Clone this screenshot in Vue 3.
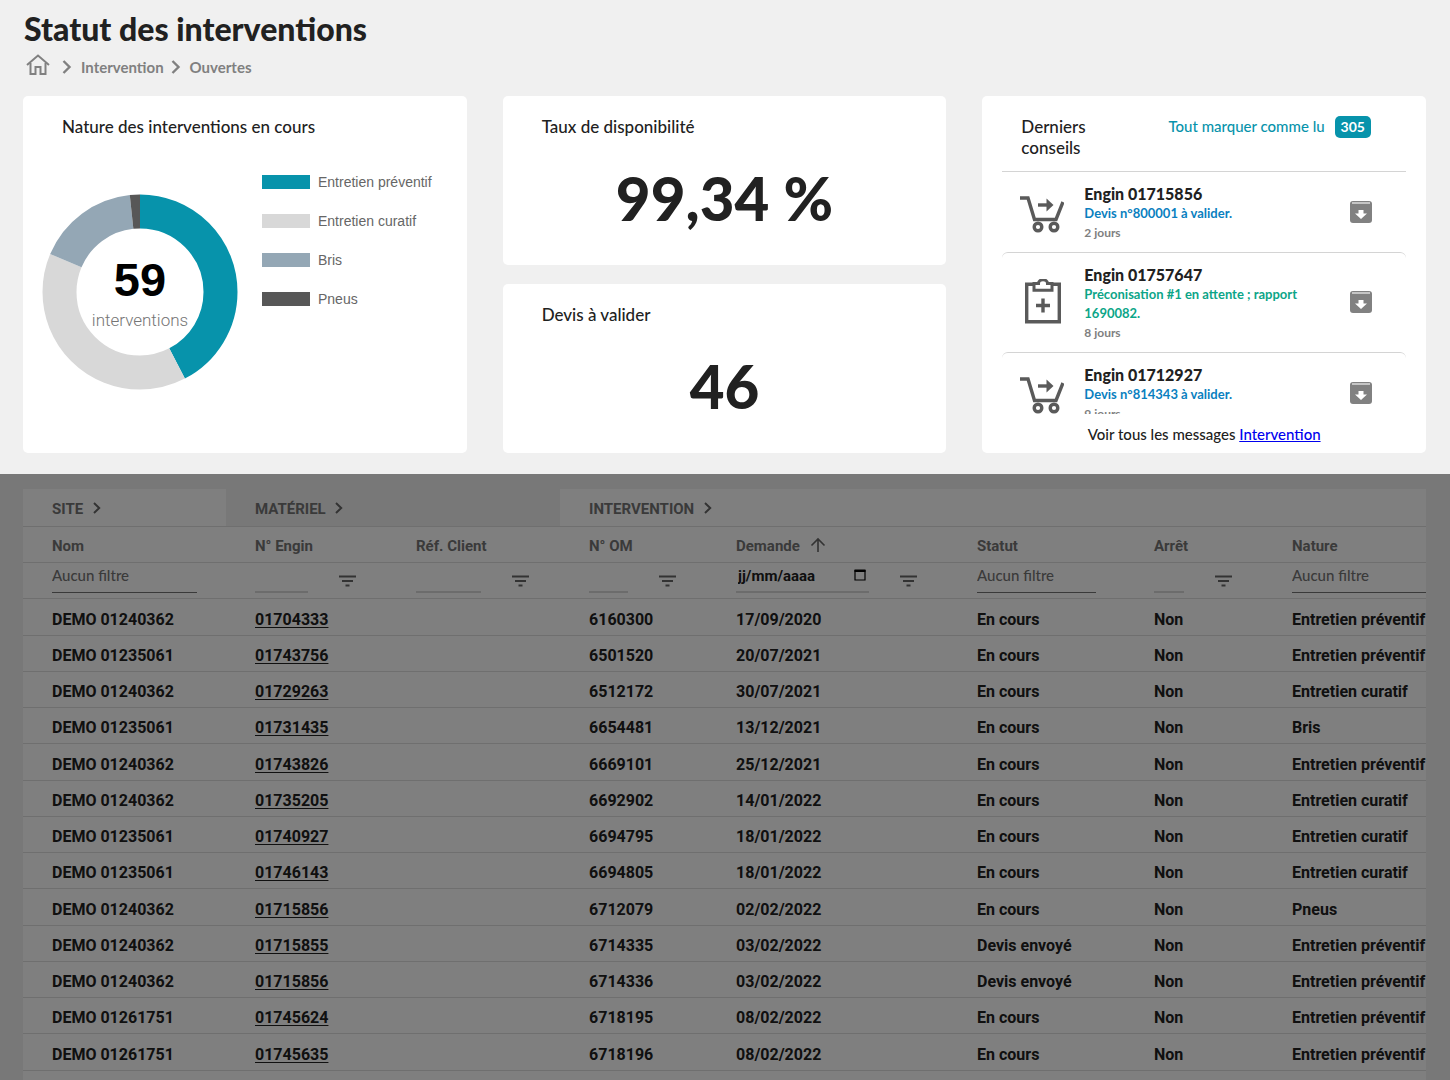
<script setup>
import { ref } from 'vue'

const slices = [
  { label: 'Entretien préventif', value: 25, color: '#0793ab' },
  { label: 'Entretien curatif', value: 23, color: '#d8d8d8' },
  { label: 'Bris', value: 10, color: '#94a7b5' },
  { label: 'Pneus', value: 1, color: '#575757' },
]
const total = slices.reduce((sum, s) => sum + s.value, 0)
const arcs = slices.map((s, i) => ({
  ...s,
  start: slices.slice(0, i).reduce((sum, p) => sum + p.value, 0),
}))

const tips = [
  { machine: 'Engin 01715856', text: 'Devis n°800001 à valider.', age: '2 jours', kind: 'quote' },
  { machine: 'Engin 01757647', text: 'Préconisation #1 en attente ; rapport 1690082.', age: '8 jours', kind: 'report' },
  { machine: 'Engin 01712927', text: 'Devis n°814343 à valider.', age: '9 jours', kind: 'quote' },
]

const columns = [
  { key: 'site', label: 'Nom', filter: 'select' },
  { key: 'machine', label: 'N° Engin', filter: 'text' },
  { key: 'client', label: 'Réf. Client', filter: 'text' },
  { key: 'order', label: 'N° OM', filter: 'text' },
  { key: 'asked', label: 'Demande', filter: 'date', sorted: true },
  { key: 'status', label: 'Statut', filter: 'select' },
  { key: 'stopped', label: 'Arrêt', filter: 'text' },
  { key: 'nature', label: 'Nature', filter: 'select' },
]

const rows = [
  ['DEMO 01240362', '01704333', '6160300', '17/09/2020', 'En cours', 'Entretien préventif'],
  ['DEMO 01235061', '01743756', '6501520', '20/07/2021', 'En cours', 'Entretien préventif'],
  ['DEMO 01240362', '01729263', '6512172', '30/07/2021', 'En cours', 'Entretien curatif'],
  ['DEMO 01235061', '01731435', '6654481', '13/12/2021', 'En cours', 'Bris'],
  ['DEMO 01240362', '01743826', '6669101', '25/12/2021', 'En cours', 'Entretien préventif'],
  ['DEMO 01240362', '01735205', '6692902', '14/01/2022', 'En cours', 'Entretien curatif'],
  ['DEMO 01235061', '01740927', '6694795', '18/01/2022', 'En cours', 'Entretien curatif'],
  ['DEMO 01235061', '01746143', '6694805', '18/01/2022', 'En cours', 'Entretien curatif'],
  ['DEMO 01240362', '01715856', '6712079', '02/02/2022', 'En cours', 'Pneus'],
  ['DEMO 01240362', '01715855', '6714335', '03/02/2022', 'Devis envoyé', 'Entretien préventif'],
  ['DEMO 01240362', '01715856', '6714336', '03/02/2022', 'Devis envoyé', 'Entretien préventif'],
  ['DEMO 01261751', '01745624', '6718195', '08/02/2022', 'En cours', 'Entretien préventif'],
  ['DEMO 01261751', '01745635', '6718196', '08/02/2022', 'En cours', 'Entretien préventif'],
].map(([site, machine, order, asked, status, nature]) => ({
  site, machine, client: '', order, asked, status, stopped: 'Non', nature,
}))

const filters = ref({ machine: '', client: '', order: '', asked: '', stopped: '' })
</script>

<template>
  <div class="page">
    <header class="head">
      <h1>Statut des interventions</h1>
      <nav class="crumbs" aria-label="Fil d'Ariane">
        <a href="#" class="home" aria-label="Accueil">
          <svg width="24" height="22" viewBox="0 0 24 22" fill="none" stroke="currentColor" stroke-width="2">
            <path d="M1 11 12 1.6 23 11" />
            <path d="M4.5 9v11h5v-7h5v7h5V9" />
          </svg>
        </a>
        <svg class="sep" width="10" height="14" viewBox="0 0 10 14" fill="none" stroke="currentColor" stroke-width="2.4"><path d="m1.5 1 6 6-6 6" /></svg>
        <a href="#">Intervention</a>
        <svg class="sep" width="10" height="14" viewBox="0 0 10 14" fill="none" stroke="currentColor" stroke-width="2.4"><path d="m1.5 1 6 6-6 6" /></svg>
        <a href="#">Ouvertes</a>
      </nav>
    </header>

    <main class="cards">
      <section class="card">
        <h2>Nature des interventions en cours</h2>
        <div class="chart">
          <div class="donut">
            <svg width="196" height="196" viewBox="0 0 196 196">
              <circle
                v-for="a in arcs" :key="a.label" cx="98" cy="98" r="80.5" fill="none"
                stroke-width="34" :stroke="a.color" :pathLength="total"
                :stroke-dasharray="`${a.value} ${total - a.value}`" :stroke-dashoffset="-a.start"
                transform="rotate(-90 98 98)"
              />
            </svg>
            <div class="donut-label">
              <strong>{{ total }}</strong>
              <span>interventions</span>
            </div>
          </div>
          <ul class="legend">
            <li v-for="s in slices" :key="s.label">
              <i :style="{ background: s.color }"></i>{{ s.label }}
            </li>
          </ul>
        </div>
      </section>

      <div class="stack">
        <section class="card">
          <h2>Taux de disponibilité</h2>
          <p class="figure">99,34 %</p>
        </section>
        <section class="card">
          <h2>Devis à valider</h2>
          <p class="figure">46</p>
        </section>
      </div>

      <section class="card tips">
        <div class="tips-head">
          <h2>Derniers conseils</h2>
          <button type="button" class="mark">Tout marquer comme lu</button>
          <span class="badge">305</span>
        </div>
        <ul class="tip-list">
          <li v-for="t in tips" :key="t.machine" class="tip">
            <svg v-if="t.kind === 'quote'" class="tip-icon" width="44" height="45" viewBox="0 -7 44 45" fill="none" stroke="#5a5a5a">
              <path d="M0 2h8l6.5 21.5h21.5L43 6" stroke-width="3.4" />
              <path d="M18 9h9" stroke-width="3.4" />
              <path d="M26.5 2.5v13L33.5 9z" fill="#5a5a5a" stroke="none" />
              <circle cx="18" cy="31" r="3.8" stroke-width="3.4" />
              <circle cx="34" cy="31" r="3.8" stroke-width="3.4" />
            </svg>
            <svg v-else class="tip-icon" width="44" height="46" viewBox="0 0 44 46" fill="none" stroke="#5a5a5a">
              <path d="M6.7 5.2h32.6v37.6H6.7z" stroke-width="3.4" />
              <path d="M14 4.5v6.8h18V4.5h-4.500c0-5-9-5-9 0z" stroke-width="3" fill="#fff" />
              <path d="M16 26.500h14M23 19.500v14" stroke-width="3.4" />
            </svg>
            <div class="tip-body">
              <h3>{{ t.machine }}</h3>
              <p :class="t.kind">{{ t.text }}</p>
              <small>{{ t.age }}</small>
            </div>
            <button type="button" class="archive" :aria-label="`Archiver ${t.machine}`">
              <svg width="22" height="22" viewBox="0 0 22 22">
                <rect width="22" height="22" rx="3" fill="#818181" />
                <path d="M2 2h18" stroke="#e2e2e2" stroke-width="1.400" />
                <path d="M8.500 9h5v3.500h3.500L11 18l-6-5.500h3.500z" fill="#fff" />
              </svg>
            </button>
          </li>
        </ul>
        <p class="all">Voir tous les messages <a href="#">Intervention</a></p>
      </section>
    </main>

    <section class="dimmed">
      <div class="sheet">
        <table>
          <colgroup>
            <col v-for="c in columns" :key="c.key" :class="`col-${c.key}`">
          </colgroup>
          <thead>
            <tr class="groups">
              <th scope="colgroup">SITE <svg width="8" height="12" viewBox="0 0 8 12"><path d="m1 1 5.200 5L1 11" /></svg></th>
              <th scope="colgroup" colspan="2" class="shaded">MATÉRIEL <svg width="8" height="12" viewBox="0 0 8 12"><path d="m1 1 5.200 5L1 11" /></svg></th>
              <th scope="colgroup" colspan="5">INTERVENTION <svg width="8" height="12" viewBox="0 0 8 12"><path d="m1 1 5.200 5L1 11" /></svg></th>
            </tr>
            <tr class="labels">
              <th v-for="c in columns" :key="c.key" scope="col">
                {{ c.label }}
                <svg v-if="c.sorted" class="arrow" width="16" height="16" viewBox="0 0 16 16"><path d="M8 15V2M1.500 8.500 8 2l6.500 6.500" /></svg>
              </th>
            </tr>
            <tr class="filters">
              <td v-for="c in columns" :key="c.key">
                <select v-if="c.filter === 'select'" :aria-label="c.label">
                  <option>Aucun filtre</option>
                </select>
                <div v-else class="filter">
                  <div class="field">
                    <input v-model="filters[c.key]" type="text" :aria-label="c.label" :placeholder="c.filter === 'date' ? 'jj/mm/aaaa' : ''">
                    <svg v-if="c.filter === 'date'" width="12" height="12" viewBox="0 0 12 12">
                      <path d="M1 1.500h10v9.500H1z" fill="none" stroke="#000" stroke-width="1.200" />
                      <path d="M.5 .5h11v2.500H.5z" />
                    </svg>
                  </div>
                  <button type="button" :aria-label="`Filtrer ${c.label}`">
                    <svg width="17" height="12" viewBox="0 0 17 12" stroke="#666" stroke-width="2"><path d="M0 1.500h17M3 6h11M6.500 10.500h4" /></svg>
                  </button>
                </div>
              </td>
            </tr>
          </thead>
          <tbody>
            <tr v-for="(r, i) in rows" :key="i">
              <td v-for="c in columns" :key="c.key">
                <a v-if="c.key === 'machine'" href="#">{{ r.machine }}</a>
                <template v-else>{{ r[c.key] }}</template>
              </td>
            </tr>
          </tbody>
        </table>
      </div>
    </section>
  </div>
</template>

<style>
body {
  margin: 0;
  background: #f0f0f0;
}
</style>

<style scoped>
* {
  box-sizing: border-box;
}
h1, h2, h3, p, ul {
  margin: 0;
  padding: 0;
}
ul {
  list-style: none;
}
button {
  border: 0;
  padding: 0;
  background: none;
  font: inherit;
  cursor: pointer;
}
svg {
  display: block;
}
.page {
  display: flex;
  flex-direction: column;
  height: 100vh;
  overflow: hidden;
  background: #f0f0f0;
  color: #212121;
  font-family: Lato, sans-serif;
}
.head {
  padding: 8px 24px 0;
}
h1 {
  font-size: 32px;
  line-height: 42px;
  font-weight: 900;
}
.crumbs {
  display: flex;
  align-items: center;
  height: 34px;
  padding-left: 2px;
  color: #808080;
  font-size: 15px;
  font-weight: 700;
}
.crumbs a {
  color: inherit;
  text-decoration: none;
}
.crumbs .home {
  margin-right: 12px;
  padding-bottom: 4px;
}
.sep {
  margin-right: 9px;
}
.crumbs a:not(.home) + .sep {
  margin-left: 7px;
}
.cards {
  display: grid;
  grid-template-columns: repeat(3, minmax(0, 1fr));
  gap: 36px;
  padding: 12px 24px 21px 23px;
}
.card {
  background: #fff;
  border-radius: 5px;
}
h2 {
  padding: 20px 39px 0;
  font-size: 17px;
  line-height: 21px;
  font-weight: 500;
}
.chart {
  display: flex;
  gap: 24px;
  padding: 57px 19px 0;
}
.donut {
  display: grid;
  flex: none;
  place-items: center;
}
.donut > * {
  grid-area: 1 / 1;
}
.donut-label {
  display: flex;
  flex-direction: column;
  align-items: center;
  padding-top: 6px;
}
.donut-label strong {
  color: #000;
  font: 700 47px/50px "Liberation Sans", sans-serif;
}
.donut-label span {
  color: #757575;
  font: 300 17px/30px Roboto, sans-serif;
}
.legend {
  margin-top: -19px;
  color: #666;
  font: 14px/14px "Liberation Sans", sans-serif;
}
.legend li {
  display: flex;
  gap: 8px;
  margin-bottom: 25px;
  white-space: nowrap;
}
.legend i {
  width: 48px;
  height: 14px;
}
.stack {
  display: grid;
  grid-template-rows: 1fr 1fr;
  gap: 19px;
}
.figure {
  padding: 25px 0 31px;
  font-size: 60px;
  line-height: 72px;
  font-weight: 900;
  text-align: center;
}
.tips {
  padding: 0 20px;
}
.tips-head {
  display: flex;
  align-items: flex-start;
  padding: 20px 35px 13px 19px;
}
.tips-head h2 {
  width: 80px;
  margin-right: auto;
  padding: 0;
}
.mark {
  margin-right: 10px;
  color: #0793ab;
  font-size: 15px;
  line-height: 20px;
  font-weight: 500;
}
.badge {
  padding: 0 6px;
  border-radius: 5px;
  background: #0793ab;
  color: #fff;
  font-size: 14px;
  line-height: 22px;
  font-weight: 700;
}
.tip-list {
  height: 243px;
  overflow: hidden;
}
.tip {
  display: flex;
  align-items: center;
  padding: 9px 34px 10px 18px;
  border-top: 1px solid #d4d4d4;
  border-radius: 6px 6px 0 0;
}
.tip:first-child {
  border-radius: 0;
}
.tip-icon {
  flex: none;
  margin-right: 20px;
}
.tip-body {
  flex: 1;
  padding: 3px 40px 0 0;
}
h3 {
  font-size: 16px;
  line-height: 20px;
  font-weight: 900;
}
.tip-body p {
  font-size: 13px;
  line-height: 19px;
  font-weight: 700;
}
.quote {
  color: #0a7fc0;
}
.report {
  color: #0ca588;
}
small {
  display: block;
  color: #808080;
  font-size: 12px;
  line-height: 19px;
  font-weight: 700;
}
.all {
  padding-top: 10px;
  font-size: 15px;
  line-height: 20px;
  font-weight: 500;
  text-align: center;
}
.all a {
  color: #00e;
}
.dimmed {
  position: relative;
  display: flex;
  flex: 1;
  min-height: 0;
  padding: 15px 24px 0 23px;
  overflow: hidden;
  font-family: Roboto, sans-serif;
}
.dimmed::after {
  content: "";
  position: absolute;
  inset: 0;
  background: rgba(0, 0, 0, 0.5);
  pointer-events: none;
}
.sheet {
  flex: 1;
  min-width: 0;
  overflow: hidden;
  background: #fff;
}
table {
  width: 1480px;
  table-layout: fixed;
  border-spacing: 0;
}
.col-site { width: 203px; }
.col-machine { width: 161px; }
.col-client { width: 173px; }
.col-order { width: 147px; }
.col-asked { width: 241px; }
.col-status { width: 177px; }
.col-stopped { width: 138px; }
th, td {
  height: 36px;
  padding: 0 0 0 29px;
  border-bottom: 1px solid #dedede;
  text-align: left;
  white-space: nowrap;
}
th {
  padding-top: 2px;
  color: #757575;
  font-size: 15px;
  font-weight: 700;
}
th svg {
  display: inline-block;
  margin-left: 6px;
  vertical-align: 0;
  fill: none;
  stroke: #666;
  stroke-width: 2;
}
th .arrow {
  vertical-align: -2px;
  stroke-width: 1.600;
}
.groups th {
  height: 38px;
}
.groups .shaded {
  background: #f1f1f1;
}
tbody td {
  padding-top: 4px;
  font-size: 16px;
  font-weight: 700;
}
tbody tr:nth-child(4n + 1) td {
  height: 37px;
}
tbody a {
  color: inherit;
  text-underline-offset: 2px;
}
.filters td {
  padding-right: 31px;
  vertical-align: top;
}
select {
  appearance: none;
  display: block;
  width: calc(100% + 2px);
  height: 30px;
  padding: 0 0 6px;
  border: 0;
  border-bottom: 1px solid #757575;
  border-radius: 0;
  background: none;
  color: #757575;
  font: 500 15px Lato, sans-serif;
}
.filter {
  display: flex;
  gap: 31px;
}
.filter button {
  padding-top: 6px;
}
.field {
  display: flex;
  flex: 1;
  align-items: center;
  min-width: 0;
  height: 30px;
  padding-bottom: 5px;
  border-bottom: 2px solid #d8d8d8;
}
.field svg {
  margin-right: 3px;
}
input {
  flex: 1;
  width: 100%;
  min-width: 0;
  padding: 2px 0 0 2px;
  border: 0;
  background: none;
  color: #212121;
  font: 700 15px Roboto, sans-serif;
}
input::placeholder {
  color: #212121;
  opacity: 1;
}
</style>
